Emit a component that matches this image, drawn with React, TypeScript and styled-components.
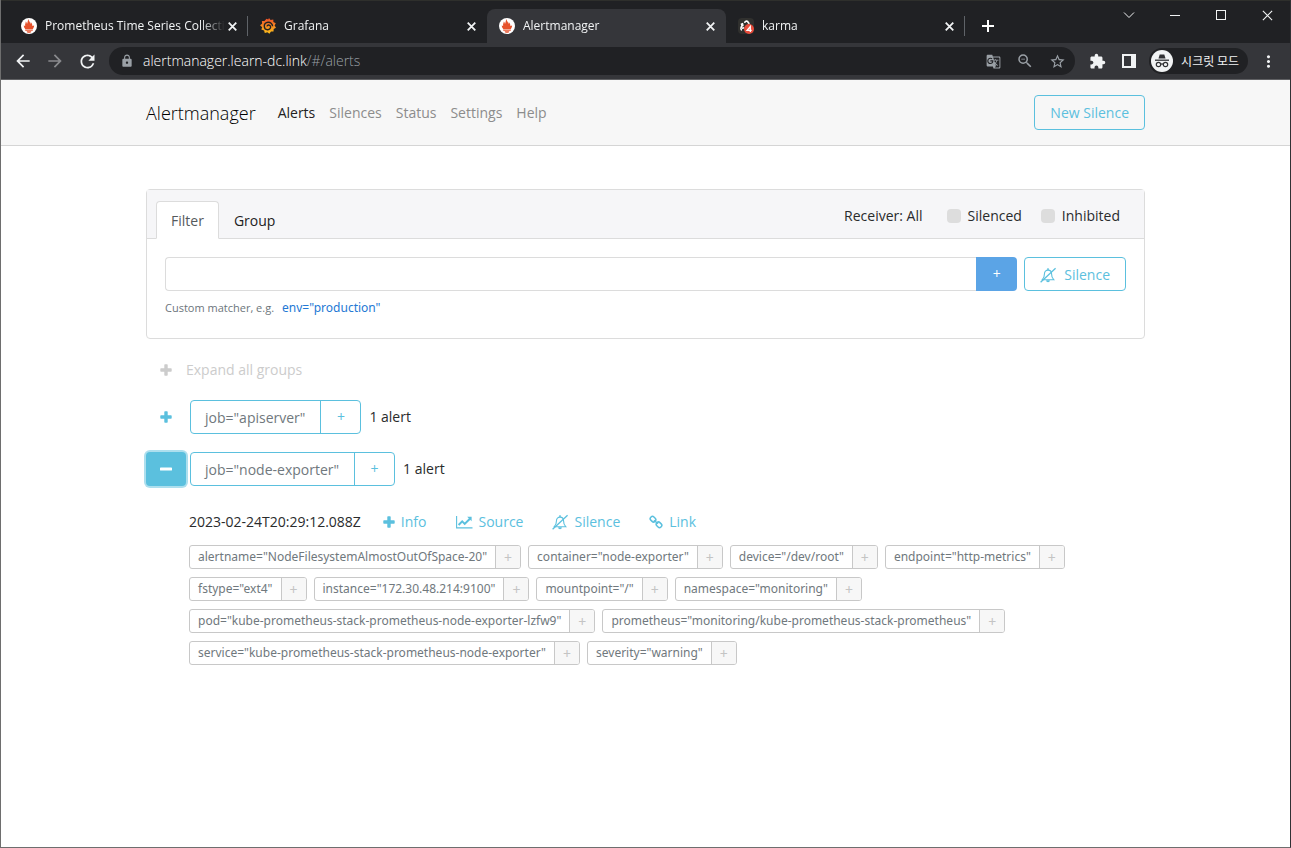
import React, { useState } from "react";
import styled, { createGlobalStyle, css } from "styled-components";
import {
  MdArrowBack,
  MdArrowForward,
  MdRefresh,
  MdLock,
  MdGTranslate,
  MdZoomOut,
  MdStarBorder,
  MdExtension,
  MdMoreVert,
} from "react-icons/md";

const cyan = "#5bc0de";
const line = "#dcdcdc";
const sans = `"Open Sans", "Noto Sans CJK KR", sans-serif`;
const compact = `"Noto Sans", "Noto Sans CJK KR", sans-serif`;

const GlobalStyle = createGlobalStyle`
  *, *::before, *::after { box-sizing: border-box; }
  body { margin: 0; background: #fff; color: #292b2c; font: 400 14px/20px ${sans}; }
  button, input { font: inherit; color: inherit; margin: 0; }
  button { padding: 0; border: 0; background: none; cursor: pointer; }
  a { color: inherit; text-decoration: none; }
  svg { display: block; flex: none; }
`;

/* ---------- browser window ---------- */

const Window = styled.div`
  min-height: 100vh;
  display: flex;
  flex-direction: column;
  border: 1px solid #6e6e6e;
  border-top: 0;
  border-right-color: #303134;
`;

const TabStrip = styled.div`
  height: 43px;
  display: flex;
  align-items: flex-end;
  padding-left: 8px;
  background: #202124;
  border-top: 1px solid #2e2f2c;
  color: #f1f3f4;
`;

const BrowserTab = styled.div<{ $active?: boolean; $divided?: boolean }>`
  position: relative;
  flex: 0 1 239px;
  min-width: 0;
  height: 34px;
  display: flex;
  align-items: center;
  gap: 8px;
  padding: 0 8px 0 12px;
  font: 400 12px/20px ${sans};
  ${(p) =>
    p.$active &&
    css`
      background: #35363a;
      border-radius: 8px 8px 0 0;
    `}
  ${(p) =>
    p.$divided &&
    css`
      &::after {
        content: "";
        position: absolute;
        right: 0;
        top: 7px;
        height: 20px;
        width: 1px;
        background: #5f6368;
      }
    `}
`;

const TabTitle = styled.span`
  flex: 1;
  min-width: 0;
  margin-right: -8px;
  overflow: hidden;
  white-space: nowrap;
  mask-image: linear-gradient(to right, #000 calc(100% - 24px), transparent);
`;

const TabClose = styled.button`
  padding: 3px;
`;

const NewTab = styled.button`
  align-self: flex-end;
  padding: 11px 17px;
`;

const WindowControls = styled.div`
  margin-left: auto;
  align-self: flex-start;
  display: flex;
`;

const WindowControl = styled.button`
  width: 46px;
  height: 28px;
  display: flex;
  align-items: center;
  justify-content: center;
`;

const Toolbar = styled.div`
  height: 37px;
  display: flex;
  align-items: center;
  padding: 0 12px;
  background: #35363a;
  border-bottom: 1px solid #5f6063;
  color: #f1f3f4;
`;

const ToolButton = styled.button<{ $dim?: boolean }>`
  width: 32px;
  display: flex;
  justify-content: center;
  color: ${(p) => (p.$dim ? "#8a8b8e" : "inherit")};
`;

const NavButtons = styled.div`
  display: flex;
  margin: 0 6px 0 -6px;
`;

const Omnibox = styled.div`
  flex: 1;
  height: 28px;
  display: flex;
  align-items: center;
  padding: 0 2px 0 11px;
  border-radius: 14px;
  background: #202124;
  color: #9aa0a6;
`;

const Address = styled.span`
  flex: 1;
  margin-left: 9px;
  font-weight: 300;
  span {
    color: #fff;
  }
`;

const ToolGroup = styled.div`
  display: flex;
  align-items: center;
  margin: 0 -6px 0 6px;
`;

const Incognito = styled.button`
  height: 26px;
  display: flex;
  align-items: center;
  gap: 8px;
  margin: 0 4px;
  padding: 0 9px 0 2px;
  border-radius: 13px;
  background: #202124;
  font: 400 12px/20px "Noto Sans CJK KR", sans-serif;
`;

/* ---------- application ---------- */

const Container = styled.div`
  width: 100%;
  max-width: 1029px;
  margin: 0 auto;
  padding: 0 15px;
`;

const Header = styled.header`
  background: #f7f7f7;
  border-bottom: 1px solid #d5d5d5;
`;

const HeaderRow = styled(Container)`
  height: 65px;
  display: flex;
  align-items: center;
`;

const Brand = styled.a`
  margin-right: 15px;
  font-size: 18px;
  font-weight: 300;
  line-height: 24px;
  color: #000;
`;

const NavLink = styled.a<{ $active?: boolean }>`
  padding: 1px 7px 0;
  color: ${(p) => (p.$active ? "#222" : "#8c8c8c")};
`;

const OutlineButton = styled.button`
  height: 35px;
  display: flex;
  align-items: center;
  gap: 8px;
  padding: 0 15px;
  border: 1px solid ${cyan};
  border-radius: 4px;
  color: ${cyan};
`;

const HeaderAction = styled.div`
  margin-left: auto;
`;

const Main = styled(Container)`
  padding-top: 43px;
  padding-bottom: 43px;
`;

const Card = styled.section`
  border: 1px solid ${line};
  border-radius: 4px;
`;

const CardHeader = styled.div`
  display: flex;
  align-items: flex-end;
  height: 49px;
  padding: 0 24px 0 9px;
  background: #f6f6f8;
  border-bottom: 1px solid ${line};
`;

const PanelTab = styled.button<{ $active?: boolean }>`
  height: 38px;
  padding: 2px 14px 0;
  margin-bottom: -1px;
  border: 1px solid transparent;
  border-radius: 4px 4px 0 0;
  color: #222;
  ${(p) =>
    p.$active &&
    css`
      background: #fff;
      border-color: ${line} ${line} #fff;
      color: #555a5d;
    `}
`;

const Options = styled.div`
  display: flex;
  align-items: center;
  gap: 19px;
  height: 48px;
  margin-left: auto;
  padding-top: 3px;
`;

const Receiver = styled.span`
  margin-right: 5px;
`;

const CheckLabel = styled.label`
  display: flex;
  align-items: center;
  gap: 7px;
`;

const Check = styled.input`
  appearance: none;
  width: 14px;
  height: 14px;
  border-radius: 4px;
  background: #ddd;
  &:checked {
    background: #0275d8;
  }
`;

const CardBody = styled.div`
  padding: 18px 18px 20px;
`;

const FilterRow = styled.form`
  display: flex;
  gap: 7px;
`;

const FilterField = styled.div`
  flex: 1;
  display: flex;
`;

const FilterInput = styled.input`
  flex: 1;
  min-width: 0;
  height: 34px;
  padding: 0 11px;
  border: 1px solid ${line};
  border-right: 0;
  border-radius: 4px 0 0 4px;
  background: #fff;
`;

const AddButton = styled.button`
  width: 41px;
  height: 34px;
  border-radius: 0 4px 4px 0;
  background: #5ba4e6;
  color: #fff;
`;

const SilenceButton = styled(OutlineButton)`
  height: 34px;
  padding-top: 1px;
`;

const Hint = styled.p`
  display: flex;
  align-items: baseline;
  gap: 8px;
  margin: 7px 0 0;
  font-size: 11px;
  color: #6c757b;
`;

const HintLink = styled.a`
  font: 400 12px/20px ${compact};
  color: #2478d4;
`;

const Groups = styled.div`
  display: flex;
  flex-direction: column;
  gap: 18px;
  padding-top: 19px;
`;

const ExpandAll = styled.button`
  align-self: flex-start;
  display: flex;
  align-items: center;
  gap: 14px;
  height: 24px;
  padding-left: 14px;
  color: #ccc;
`;

const GroupRow = styled.div`
  display: flex;
  align-items: center;
`;

const Toggle = styled.button<{ $open?: boolean }>`
  width: 40px;
  height: 34px;
  display: flex;
  align-items: center;
  justify-content: center;
  margin-right: 4px;
  border-radius: 4px;
  color: ${cyan};
  ${(p) =>
    p.$open &&
    css`
      background: ${cyan};
      color: #fff;
      box-shadow: 0 0 0 2px rgba(91, 192, 222, 0.5);
    `}
`;

const GroupTag = styled.div`
  display: flex;
  height: 34px;
  margin-right: 8px;
  border: 1px solid ${cyan};
  border-radius: 4px;
`;

const GroupLabel = styled.span`
  padding: 7px 15px 5px 14px;
  line-height: 20px;
  color: #70787d;
`;

const GroupAdd = styled.button`
  width: 40px;
  border-left: 1px solid ${cyan};
  color: ${cyan};
`;

const Alert = styled.article`
  padding-left: 43px;
`;

const AlertActions = styled.div`
  display: flex;
  align-items: center;
  height: 35px;
  gap: 7px;
`;

const StartTime = styled.time`
  margin-right: 4px;
`;

const Action = styled.button`
  display: flex;
  align-items: center;
  gap: 6px;
  padding: 0 11px;
  color: ${cyan};
`;

const Labels = styled.div`
  display: flex;
  flex-wrap: wrap;
  gap: 8px 7px;
  margin-top: 6px;
`;

const Chip = styled.div`
  display: flex;
  height: 24px;
  border: 1px solid #c8c8c8;
  border-radius: 3px;
  overflow: hidden;
  font: 400 12px/22px ${compact};
  color: #70787d;
`;

const ChipText = styled.button`
  padding: 0 8px;
`;

const ChipAdd = styled.button`
  width: 25px;
  padding-top: 1px;
  border-left: 1px solid #c8c8c8;
  background: #f7f7f7;
  font-size: 14px;
  color: #c4c4c4;
`;

/* ---------- icons ---------- */

const Cross = ({ size = 9, width = 2 }: { size?: number; width?: number }) => (
  <svg width={size} height={size} viewBox="0 0 10 10" stroke="currentColor" strokeWidth={width} aria-hidden="true">
    <path d="M.8.8l8.4 8.4M9.2.8L.8 9.2" />
  </svg>
);

const PlusIcon = () => (
  <svg width="12" height="12" viewBox="0 0 12 12" fill="currentColor" aria-hidden="true">
    <path d="M5 .3h2q.7 0 .7.7v3.3H11q.7 0 .7.7v2q0 .7-.7.7H7.700V11q0 .7-.7.7H5q-.7 0-.7-.7V7.700H1Q.3 7.700.3 7V5q0-.7.7-.7h3.300V1Q4.300.3 5 .3z" />
  </svg>
);

const MinusIcon = () => (
  <svg width="12" height="12" viewBox="0 0 12 12" fill="currentColor" aria-hidden="true">
    <rect x="0" y="4.400" width="12" height="3.200" rx=".7" />
  </svg>
);

const ChartIcon = () => (
  <svg width="17" height="14" viewBox="0 0 17 14" fill="none" stroke="currentColor" aria-hidden="true">
    <path d="M.6 1v11.900H16.500" strokeWidth="1.100" />
    <path d="M2.600 10L6.200 6.400l2.500 2.500 5.200-5.200" strokeWidth="2" />
    <path d="M11.200 1.800h4.400v4.400z" fill="currentColor" stroke="none" />
  </svg>
);

const BellSlashIcon = () => (
  <svg width="16" height="16" viewBox="0 0 16 16" fill="none" stroke="currentColor" aria-hidden="true">
    <path d="M2.300 12.700C4 11 4.500 9.300 4.500 6.600 4.500 4.600 6 3.100 8 3.100s3.500 1.500 3.500 3.500c0 2.700.5 4.400 2.200 6.100z" strokeWidth="1.100" />
    <path d="M8 1.200v1.900" strokeWidth="1.500" />
    <path d="M6.100 13.300a1.900 1.900 0 0 0 3.800 0z" fill="currentColor" stroke="none" />
    <path d="M.6 15.200L15.600 1.200" strokeWidth="1.300" />
  </svg>
);

const LinkIcon = () => (
  <svg width="14" height="14" viewBox="0 0 14 14" fill="none" stroke="currentColor" strokeWidth="1.500" aria-hidden="true">
    <rect x="1.100" y="2" width="5.800" height="4.400" rx="2" transform="rotate(45 4 4.200)" />
    <rect x="7.100" y="7.600" width="5.800" height="4.400" rx="2" transform="rotate(45 10 9.800)" />
    <path d="M5 5.200l4 3.600" />
  </svg>
);

const PrometheusLogo = () => (
  <svg width="16" height="16" viewBox="0 0 16 16" aria-hidden="true">
    <circle cx="8" cy="8" r="8" fill="#fff" />
    <path
      fill="#e6522c"
      d="M8 14.800c-1.300 0-2.300-.7-2.300-1.600h4.600c0 .9-1 1.600-2.300 1.600zM4.200 12.700v-1.200h7.600v1.200zM4.200 11c-1-1.100-1.500-2.200-1.500-3.400l1.500.5C3.600 6 5 5 4.700 3.400c1 .6 1.100 1.800 1.300 2.600.8-1.200.6-3.400 1.500-4.900.3 1.300.3 1.700 1.200 2.800.5.7.6 1.300.5 2.100.6-.7.6-1.500.5-2.100 1.300 1.300 1.700 2.700 1.700 4.200l1.700-.5c0 1.300-.5 2.400-1.300 3.400z"
    />
  </svg>
);

const GrafanaLogo = () => (
  <svg width="16" height="16" viewBox="0 0 16 16" aria-hidden="true">
    <defs>
      <linearGradient id="grafana" x1="0" y1="1" x2="0" y2="0">
        <stop offset="0" stopColor="#fcc21b" />
        <stop offset="1" stopColor="#f04e28" />
      </linearGradient>
    </defs>
    <path
      fill="url(#grafana)"
      d="M9 0l1.600 1.900 2.700-.4.1 2.500L15.800 5.300l-1.200 2.200L16 9.800l-2.300 1.200-.2 2.600-2.500-.1L9.400 15.800l-2-1.600-2.600.8-.7-2.500L1.300 11.600l.9-2.400L0 7.200l2.100-1.500-.2-2.600 2.600-.1L6.500.8l1.700.8z"
    />
    <path
      fill="none"
      stroke="#202124"
      strokeWidth="1.400"
      d="M12.600 8.300C12.400 5.700 10.400 4 8 4.200c-2.300.2-4 2-3.700 4.300.2 2 1.700 3.300 3.500 3.200 1.700-.1 2.900-1.300 2.800-2.800C10.500 7.700 9.600 7 8.600 7c-.9 0-1.500.6-1.400 1.400"
    />
  </svg>
);

const KarmaLogo = () => (
  <svg width="16" height="16" viewBox="0 0 16 16" aria-hidden="true">
    <rect width="16" height="16" rx="4" fill="#30302e" />
    <path d="M2.800 6.500l2.400-.9M5.600 7.400c-2.400-.3-3.600 3.600-1.900 5M4 10.300l2.300-.6M6.600 4.800C7 2.700 9.800 2.600 10.200 4.500l1.200 1.300" fill="none" stroke="#fff" strokeWidth="1.600" />
    <circle cx="11" cy="11" r="5" fill="#e74c3c" />
    <path d="M12.300 14V8.600L9.100 12.300h4.600" fill="none" stroke="#fff" strokeWidth="1.300" />
  </svg>
);

const IncognitoIcon = () => (
  <svg width="22" height="22" viewBox="0 0 22 22" aria-hidden="true">
    <circle cx="11" cy="11" r="11" fill="#f1f3f4" />
    <path d="M7.500 8.500L8.700 4.500h4.600l1.200 4z" fill="#303134" />
    <path d="M4 10.200h14" stroke="#303134" strokeWidth="1.300" />
    <g fill="none" stroke="#303134" strokeWidth="1.200">
      <circle cx="7.500" cy="14.500" r="2.200" />
      <circle cx="14.500" cy="14.500" r="2.200" />
      <path d="M9.700 14.300q1.300-.8 2.600 0" />
    </g>
  </svg>
);

/* ---------- data ---------- */

const browserTabs = [
  { title: "Prometheus Time Series Collecti", icon: <PrometheusLogo />, divided: true },
  { title: "Grafana", icon: <GrafanaLogo /> },
  { title: "Alertmanager", icon: <PrometheusLogo />, active: true },
  { title: "karma", icon: <KarmaLogo />, divided: true },
];

const navItems = ["Alerts", "Silences", "Status", "Settings", "Help"];

const labels = [
  ["alertname", "NodeFilesystemAlmostOutOfSpace-20"],
  ["container", "node-exporter"],
  ["device", "/dev/root"],
  ["endpoint", "http-metrics"],
  ["fstype", "ext4"],
  ["instance", "172.30.48.214:9100"],
  ["mountpoint", "/"],
  ["namespace", "monitoring"],
  ["pod", "kube-prometheus-stack-prometheus-node-exporter-lzfw9"],
  ["prometheus", "monitoring/kube-prometheus-stack-prometheus"],
  ["service", "kube-prometheus-stack-prometheus-node-exporter"],
  ["severity", "warning"],
];

const Group = ({ name, open }: { name: string; open?: boolean }) => (
  <GroupRow>
    <Toggle $open={open} aria-expanded={!!open} aria-label={`Toggle ${name}`}>
      {open ? <MinusIcon /> : <PlusIcon />}
    </Toggle>
    <GroupTag>
      <GroupLabel>{`job="${name}"`}</GroupLabel>
      <GroupAdd>+</GroupAdd>
    </GroupTag>
    <span>1 alert</span>
  </GroupRow>
);

const BrowserChrome = () => (
  <>
    <TabStrip>
      {browserTabs.map((t) => (
        <BrowserTab key={t.title} $active={t.active} $divided={t.divided}>
          {t.icon}
          <TabTitle>{t.title}</TabTitle>
          <TabClose aria-label={`Close ${t.title}`}>
            <Cross />
          </TabClose>
        </BrowserTab>
      ))}
      <NewTab aria-label="New tab">
        <svg width="12" height="12" viewBox="0 0 12 12" stroke="#fff" strokeWidth="2">
          <path d="M6 0v12M0 6h12" />
        </svg>
      </NewTab>
      <WindowControls>
        <WindowControl aria-label="Search tabs">
          <svg width="12" height="8" viewBox="0 0 12 8" fill="none" stroke="currentColor">
            <path d="M1 1.500l5 5 5-5" />
          </svg>
        </WindowControl>
        <WindowControl aria-label="Minimize">
          <svg width="10" height="2" viewBox="0 0 10 2" fill="currentColor">
            <rect width="10" height="1" y="1" />
          </svg>
        </WindowControl>
        <WindowControl aria-label="Maximize">
          <svg width="10" height="10" viewBox="0 0 10 10" fill="none" stroke="currentColor">
            <rect x=".5" y=".5" width="9" height="9" />
          </svg>
        </WindowControl>
        <WindowControl aria-label="Close window">
          <Cross size={11} width={1} />
        </WindowControl>
      </WindowControls>
    </TabStrip>
    <Toolbar>
      <NavButtons>
        <ToolButton aria-label="Back">
          <MdArrowBack size={20} />
        </ToolButton>
        <ToolButton $dim aria-label="Forward">
          <MdArrowForward size={20} />
        </ToolButton>
        <ToolButton aria-label="Reload">
          <MdRefresh size={21} />
        </ToolButton>
      </NavButtons>
      <Omnibox>
        <MdLock size={14} />
        <Address>
          <span>alertmanager.learn-dc.link</span>/#/alerts
        </Address>
        <ToolButton aria-label="Translate">
          <MdGTranslate size={15} />
        </ToolButton>
        <ToolButton aria-label="Zoom">
          <MdZoomOut size={18} />
        </ToolButton>
        <ToolButton aria-label="Bookmark">
          <MdStarBorder size={17} />
        </ToolButton>
      </Omnibox>
      <ToolGroup>
        <ToolButton aria-label="Extensions">
          <MdExtension size={17} />
        </ToolButton>
        <ToolButton aria-label="Side panel">
          <svg width="14" height="14" viewBox="0 0 14 14" fill="currentColor">
            <path d="M0 0h14v14H0zM2 2v10h7V2z" fillRule="evenodd" />
          </svg>
        </ToolButton>
        <Incognito>
          <IncognitoIcon />
          시크릿 모드
        </Incognito>
        <ToolButton aria-label="Menu">
          <MdMoreVert size={19} />
        </ToolButton>
      </ToolGroup>
    </Toolbar>
  </>
);

export default function App() {
  const [filter, setFilter] = useState("");
  return (
    <Window>
      <GlobalStyle />
      <BrowserChrome />
      <Header>
        <HeaderRow as="nav">
          <Brand href="#/">Alertmanager</Brand>
          {navItems.map((item) => (
            <NavLink key={item} href={`#/${item.toLowerCase()}`} $active={item === "Alerts"}>
              {item}
            </NavLink>
          ))}
          <HeaderAction>
            <OutlineButton>New Silence</OutlineButton>
          </HeaderAction>
        </HeaderRow>
      </Header>
      <Main as="main">
        <Card>
          <CardHeader>
            <PanelTab $active>Filter</PanelTab>
            <PanelTab>Group</PanelTab>
            <Options>
              <Receiver>Receiver: All</Receiver>
              <CheckLabel>
                <Check type="checkbox" />
                Silenced
              </CheckLabel>
              <CheckLabel>
                <Check type="checkbox" />
                Inhibited
              </CheckLabel>
            </Options>
          </CardHeader>
          <CardBody>
            <FilterRow onSubmit={(e) => e.preventDefault()}>
              <FilterField>
                <FilterInput aria-label="Custom matcher" value={filter} onChange={(e) => setFilter(e.target.value)} />
                <AddButton>+</AddButton>
              </FilterField>
              <SilenceButton type="button">
                <BellSlashIcon />
                Silence
              </SilenceButton>
            </FilterRow>
            <Hint>
              Custom matcher, e.g.
              <HintLink href="#/alerts">env="production"</HintLink>
            </Hint>
          </CardBody>
        </Card>
        <Groups>
          <ExpandAll>
            <PlusIcon />
            Expand all groups
          </ExpandAll>
          <Group name="apiserver" />
          <Group name="node-exporter" open />
          <Alert>
            <AlertActions>
              <StartTime>2023-02-24T20:29:12.088Z</StartTime>
              <Action>
                <PlusIcon />
                Info
              </Action>
              <Action>
                <ChartIcon />
                Source
              </Action>
              <Action>
                <BellSlashIcon />
                Silence
              </Action>
              <Action>
                <LinkIcon />
                Link
              </Action>
            </AlertActions>
            <Labels>
              {labels.map(([k, v]) => (
                <Chip key={k}>
                  <ChipText>{`${k}="${v}"`}</ChipText>
                  <ChipAdd>+</ChipAdd>
                </Chip>
              ))}
            </Labels>
          </Alert>
        </Groups>
      </Main>
    </Window>
  );
}
